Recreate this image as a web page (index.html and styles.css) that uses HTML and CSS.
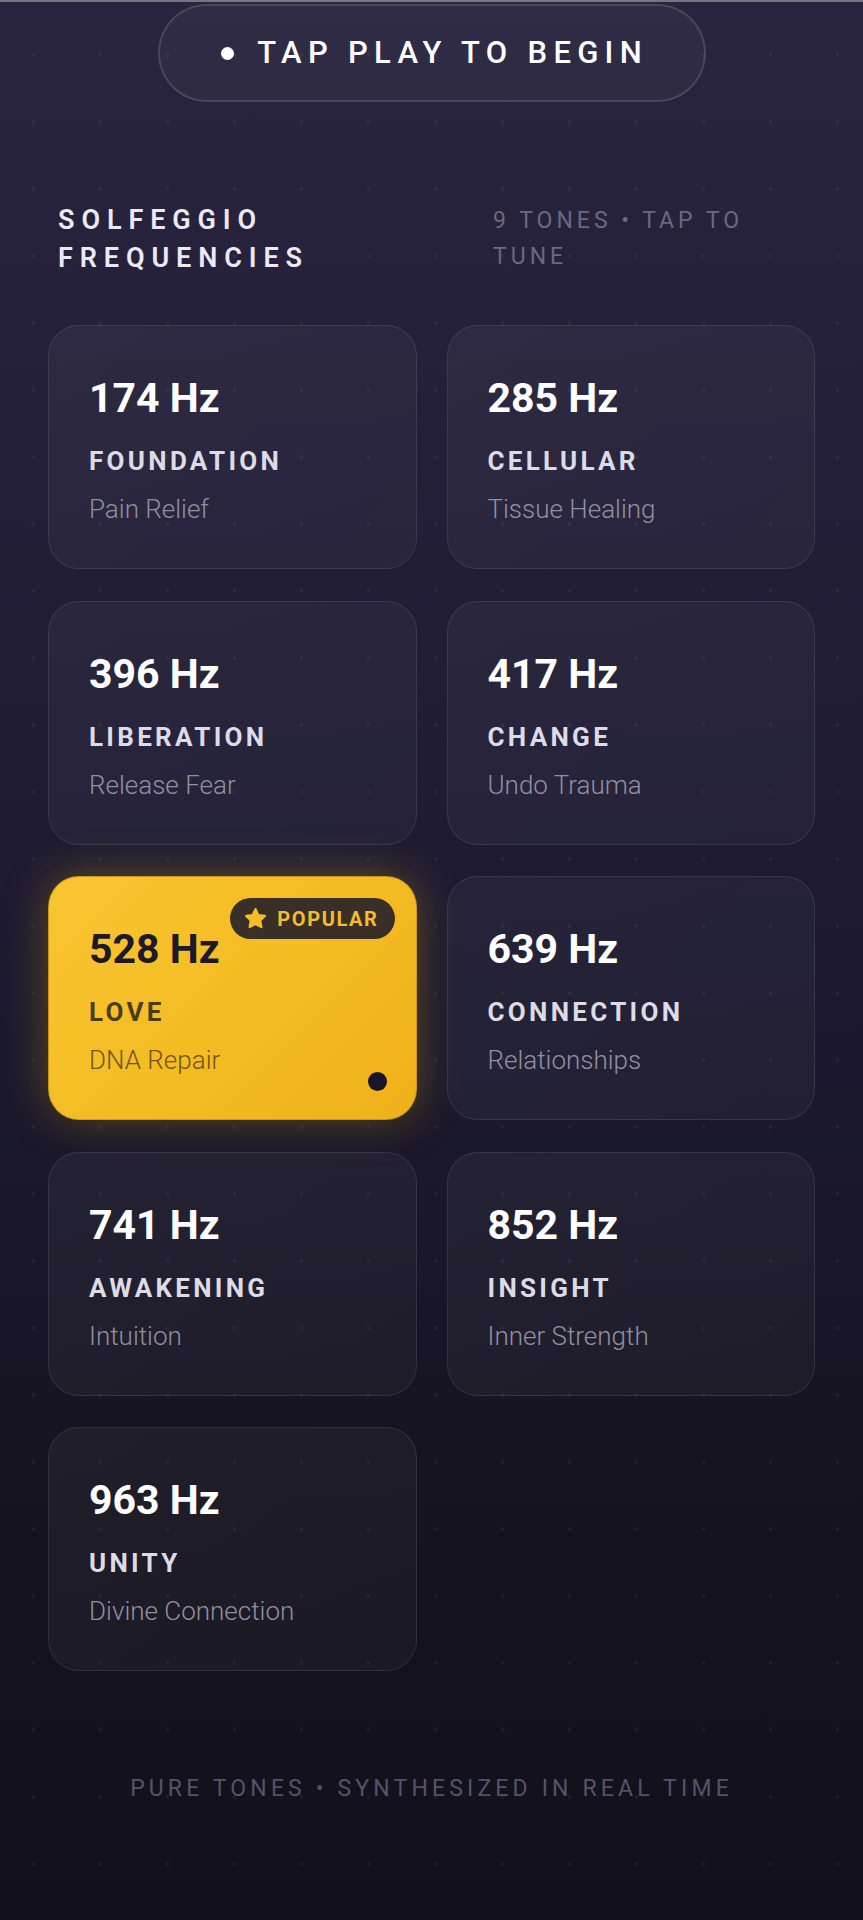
FILE: index.html
```html
<!DOCTYPE html>
<html lang="en">
<head>
<meta charset="utf-8">
<meta name="viewport" content="width=device-width, initial-scale=1">
<title>Solfeggio Frequencies</title>
<link rel="stylesheet" href="styles.css">
</head>
<body>
<div class="page">
  <div class="pill">
    <span class="pill-dot"></span>
    <span class="pill-text">TAP PLAY TO BEGIN</span>
  </div>

  <div class="header">
    <h2 class="title">SOLFEGGIO FREQUENCIES</h2>
    <div class="meta">9 TONES • TAP TO TUNE</div>
  </div>

  <div class="grid">
    <div class="card">
      <div class="hz">174 Hz</div>
      <div class="label">FOUNDATION</div>
      <div class="sub">Pain Relief</div>
    </div>
    <div class="card">
      <div class="hz">285 Hz</div>
      <div class="label">CELLULAR</div>
      <div class="sub">Tissue Healing</div>
    </div>
    <div class="card">
      <div class="hz">396 Hz</div>
      <div class="label">LIBERATION</div>
      <div class="sub">Release Fear</div>
    </div>
    <div class="card">
      <div class="hz">417 Hz</div>
      <div class="label">CHANGE</div>
      <div class="sub">Undo Trauma</div>
    </div>
    <div class="card card-active">
      <div class="badge">
        <svg class="star" viewBox="0 0 24 24" aria-hidden="true"><polygon points="12,3 14.8,8.8 21,9.6 16.5,13.9 17.6,20.2 12,17.2 6.4,20.2 7.5,13.9 3,9.6 9.2,8.8" fill="#f4bd2a" stroke="#f4bd2a" stroke-width="2.2" stroke-linejoin="round"/></svg>
        <span>POPULAR</span>
      </div>
      <div class="hz">528 Hz</div>
      <div class="label">LOVE</div>
      <div class="sub">DNA Repair</div>
      <span class="playing-dot"></span>
    </div>
    <div class="card">
      <div class="hz">639 Hz</div>
      <div class="label">CONNECTION</div>
      <div class="sub">Relationships</div>
    </div>
    <div class="card">
      <div class="hz">741 Hz</div>
      <div class="label">AWAKENING</div>
      <div class="sub">Intuition</div>
    </div>
    <div class="card">
      <div class="hz">852 Hz</div>
      <div class="label">INSIGHT</div>
      <div class="sub">Inner Strength</div>
    </div>
    <div class="card">
      <div class="hz">963 Hz</div>
      <div class="label">UNITY</div>
      <div class="sub">Divine Connection</div>
    </div>
  </div>

  <div class="footer">PURE TONES • SYNTHESIZED IN REAL TIME</div>
</div>
</body>
</html>
```

FILE: styles.css
```css
* { box-sizing: border-box; }

html, body {
  margin: 0;
  padding: 0;
  background: #13111d;
}

body {
  font-family: Roboto, "Liberation Sans", Arial, sans-serif;
  color: #ffffff;
}

.page {
  min-height: 1920px;
  border-top: 2px solid #76747e;
  padding: 2px 48px 0;
  background:
    radial-gradient(circle at 33.5px 33.5px, rgba(255,255,255,0.05) 0 1.6px, transparent 2.2px) 0 19.5px / 67px 67px,
    linear-gradient(180deg, #29253f 0%, #231f38 25%, #1c192e 55%, #15131f 80%, #12101b 100%);
}

/* pill */
.pill {
  width: 548px;
  height: 98px;
  margin: 0 auto;
  border-radius: 49px;
  border: 2px solid rgba(255,255,255,0.13);
  background: rgba(255,255,255,0.035);
  display: flex;
  align-items: center;
  justify-content: center;
  gap: 23px;
}

.pill-dot {
  width: 13px;
  height: 13px;
  border-radius: 50%;
  background: #ffffff;
}

.pill-text {
  font-size: 31px;
  font-weight: 500;
  letter-spacing: 6.3px;
  margin-right: -6.3px;
  line-height: 40px;
  color: #ffffff;
}

/* header */
.header {
  margin-top: 99px;
  padding: 0 10px;
  display: flex;
  align-items: flex-start;
}

.title {
  margin: 0;
  width: 435px;
  flex: 0 0 435px;
  font-size: 27px;
  font-weight: 600;
  letter-spacing: 6.9px;
  line-height: 38px;
  color: #ece9f4;
}

.meta {
  max-width: 290px;
  font-size: 23px;
  font-weight: 400;
  letter-spacing: 4px;
  line-height: 36px;
  color: #6c6881;
  padding-top: 2px;
}

/* grid */
.grid {
  margin-top: 48px;
  display: grid;
  grid-template-columns: 1fr 1fr;
  column-gap: 30px;
  row-gap: 31.5px;
}

.card {
  position: relative;
  height: 244px;
  border-radius: 31px;
  border: 1.5px solid rgba(255,255,255,0.09);
  background: linear-gradient(135deg, rgba(255,255,255,0.045), rgba(255,255,255,0.03));
  padding: 48px 40px 0;
}

.hz {
  font-size: 41px;
  font-weight: 700;
  line-height: 48px;
  color: #ffffff;
}

.label {
  margin-top: 23px;
  font-size: 26px;
  font-weight: 700;
  letter-spacing: 3.3px;
  line-height: 32px;
  color: #dddbe6;
}

.sub {
  margin-top: 16px;
  font-size: 26px;
  font-weight: 300;
  line-height: 32px;
  color: #928fa2;
}

/* active card */
.card-active {
  border-color: rgba(120,80,0,0.35);
  background: linear-gradient(135deg, #f8c531 0%, #f4bb22 55%, #efb119 100%);
  box-shadow: 0 0 44px rgba(243,182,30,0.34), 0 8px 24px rgba(0,0,0,0.25);
}

.card-active .hz { color: #1d1928; }
.card-active .label { color: #4a3b12; }
.card-active .sub { color: #6e561a; }

.badge {
  position: absolute;
  top: 21px;
  right: 21px;
  height: 41px;
  padding: 0 16px 0 13px;
  border-radius: 21px;
  background: #3a2f26;
  display: flex;
  align-items: center;
  gap: 9px;
  font-size: 20px;
  font-weight: 700;
  letter-spacing: 1.6px;
  color: #f3bd2d;
}

.star {
  width: 25px;
  height: 25px;
  display: block;
}

.playing-dot {
  position: absolute;
  right: 29px;
  bottom: 28px;
  width: 19px;
  height: 19px;
  border-radius: 50%;
  background: #1a1629;
}

/* footer */
.footer {
  margin-top: 103px;
  text-align: center;
  font-size: 23px;
  font-weight: 400;
  letter-spacing: 4.15px;
  line-height: 30px;
  color: #55526a;
}
```
